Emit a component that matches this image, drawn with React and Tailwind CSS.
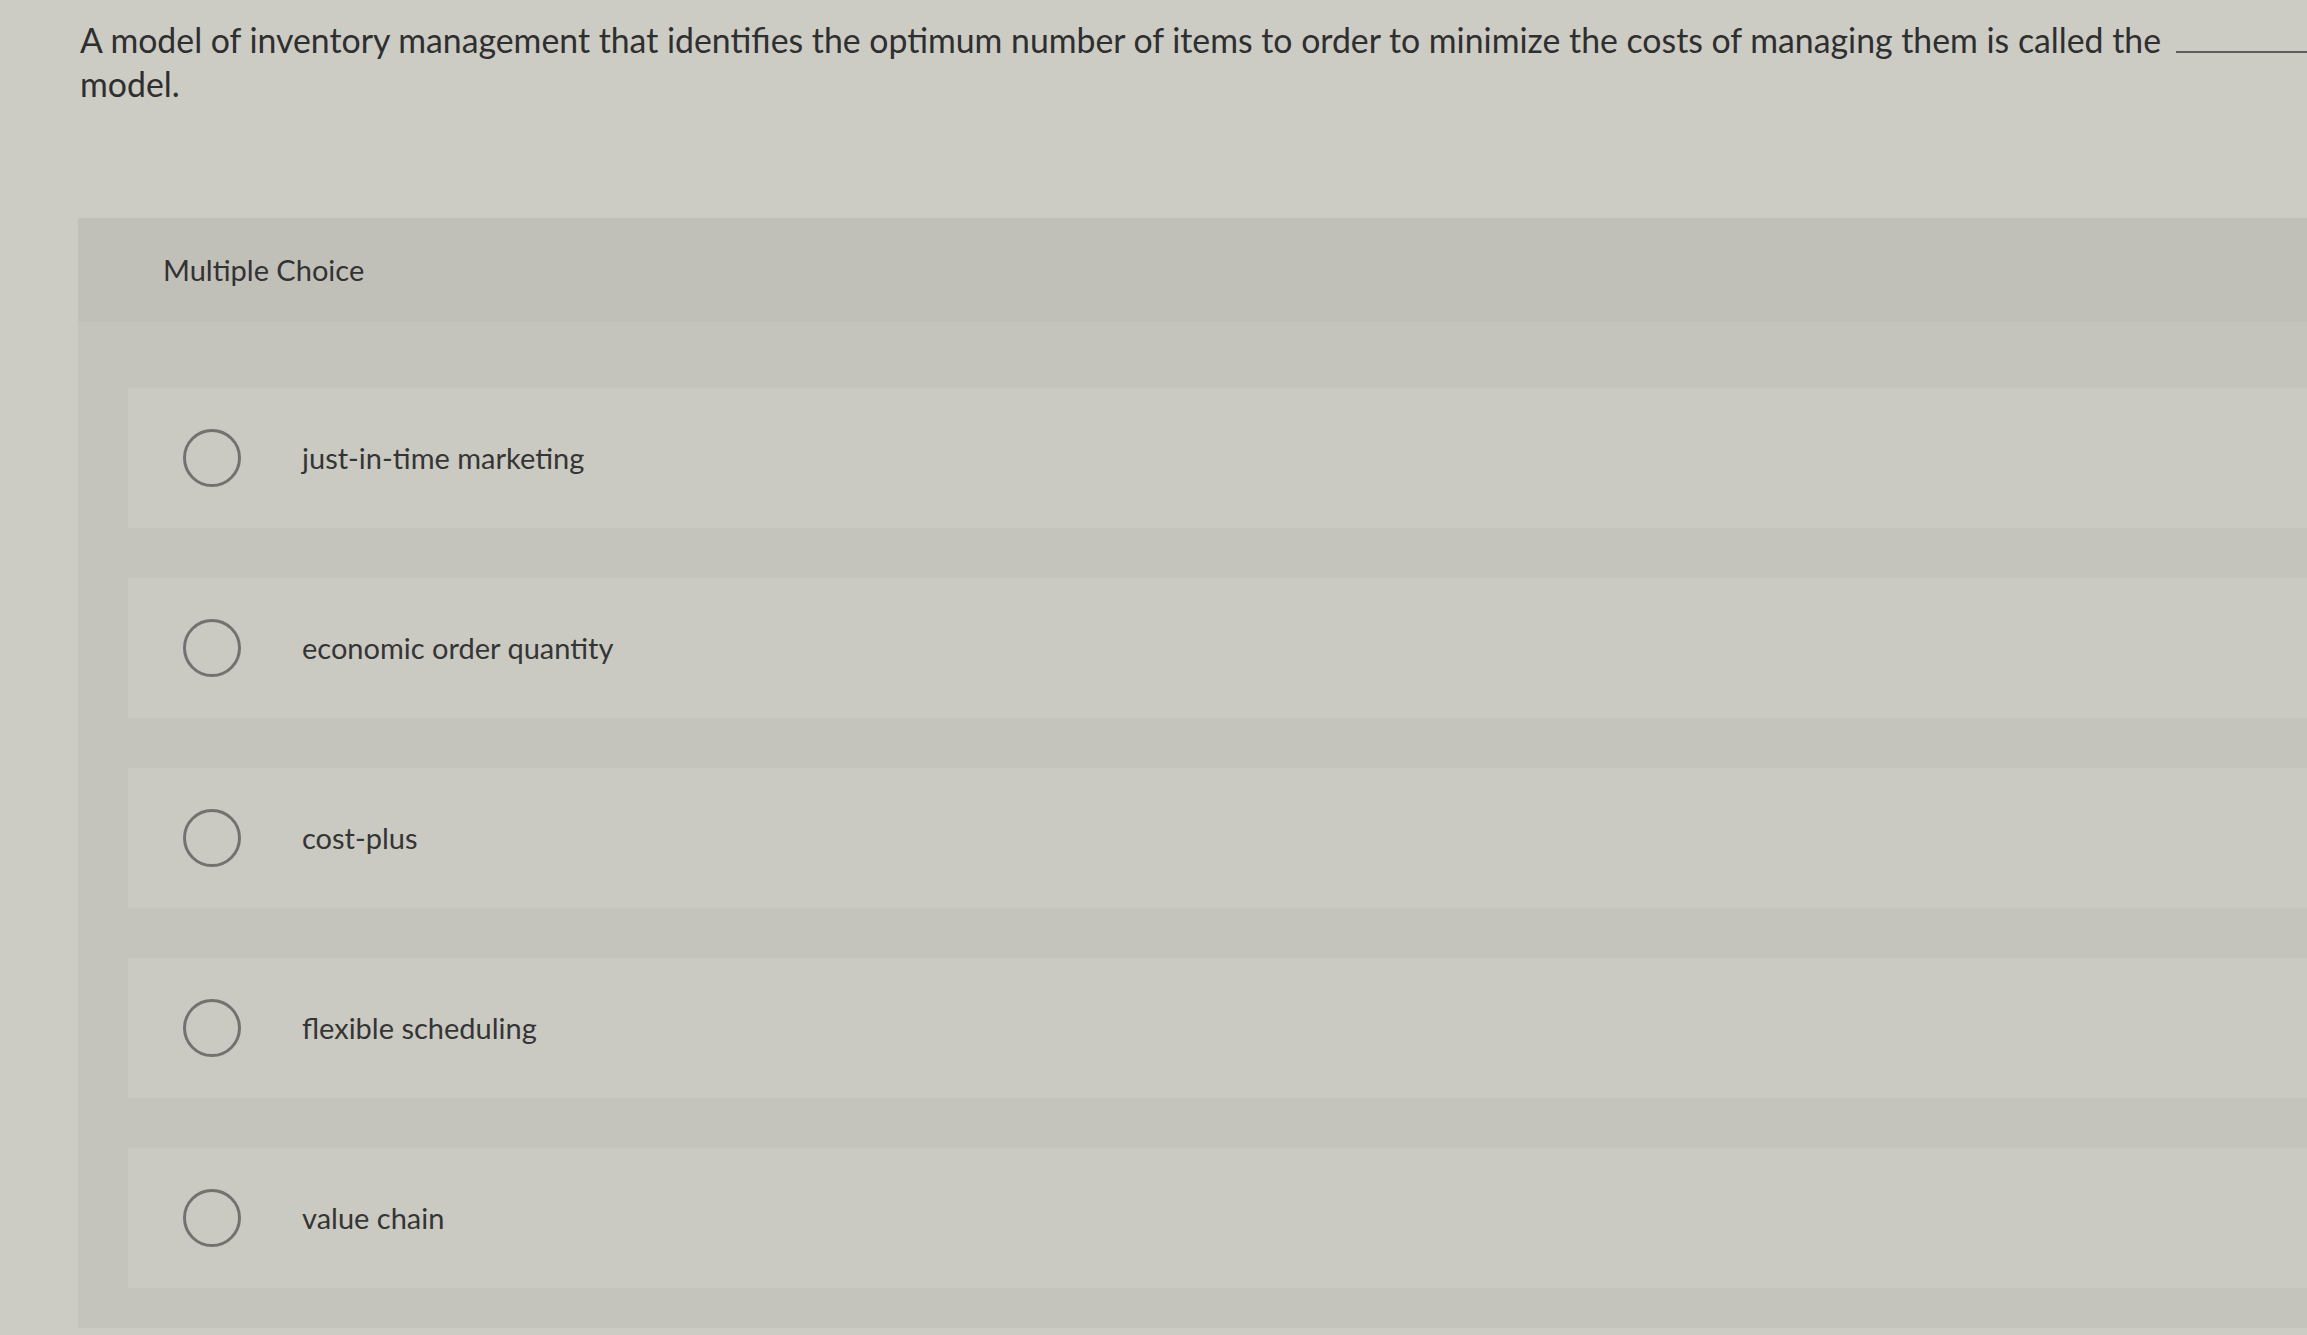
import React from 'react';

const choices = [
  'just-in-time marketing',
  'economic order quantity',
  'cost-plus',
  'flexible scheduling',
  'value chain',
];

function Choice({ label }) {
  return (
    <div className="h-[140px] bg-[#cbcac2] flex items-center">
      <span className="ml-[55px] w-[58px] h-[58px] rounded-full border-[3px] border-[#727270] shrink-0" />
      <span className="ml-[61px] text-[29px] text-[#353535]">{label}</span>
    </div>
  );
}

export default function App() {
  return (
    <div
      className="w-full min-h-screen h-[1335px] overflow-hidden bg-[#cccbc4]"
      style={{ fontFamily: 'Lato, "Open Sans", sans-serif' }}
    >
      <div className="pl-[80px] pt-[18px] text-[33.8px] leading-[44px] text-[#2f2f2f] whitespace-nowrap">
        A model of inventory management that identifies the optimum number of items to order to minimize the costs of managing them is called the{' '}
        <span className="inline-block w-[180px] ml-[6px] border-b-2 border-[#5e5e5c] align-baseline" />
        <br />
        model.
      </div>

      <div className="mt-[112px] ml-[78px] bg-[#c5c4bc] pb-[40px]">
        <div className="h-[104px] bg-[#c1c0b8] flex items-center pl-[85px]">
          <span className="text-[29px] text-[#333333]">Multiple Choice</span>
        </div>
        <div className="pl-[50px] pt-[66px] flex flex-col gap-[50px]">
          {choices.map((c) => (
            <Choice key={c} label={c} />
          ))}
        </div>
      </div>
    </div>
  );
}
